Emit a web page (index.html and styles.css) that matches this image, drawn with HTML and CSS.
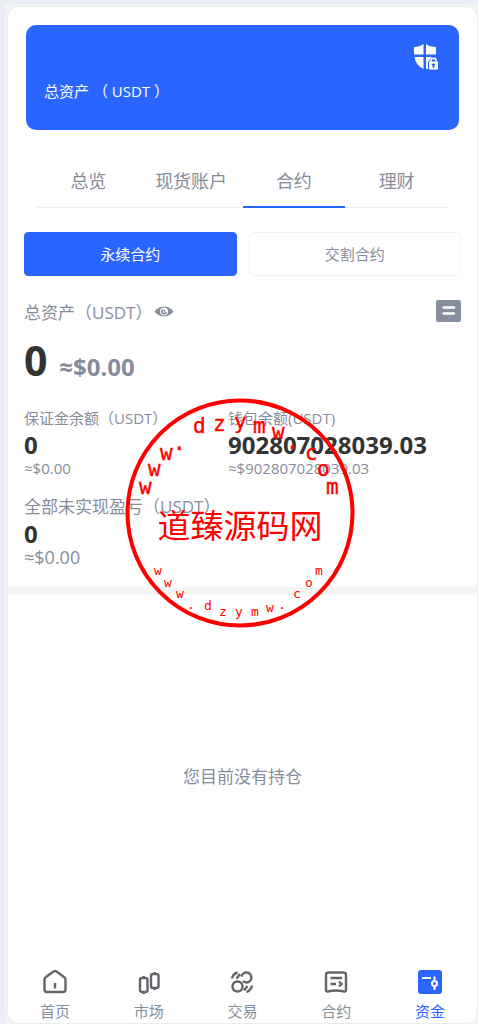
FILE: index.html
```
<!doctype html>
<html lang="zh-CN">
<head>
  <meta charset="utf-8">
  <meta name="viewport" content="width=device-width, initial-scale=1">
  <title>资金</title>
  <link rel="stylesheet" href="styles.css">
</head>
<body>
  <div class="shell">
    <div class="app">
      <main>
        <header class="banner">
          <button class="icon-btn" aria-label="安全">
            <svg width="26" height="28" viewBox="0 0 26 28">
              <path fill="#fff" d="M1 4Q7 4 10.500 1V11.500H1zM13 1Q16.500 4 23 4V11.500H13zM1.500 14H10.500V26Q2.500 22 1.500 14zM13 14H22.500V15Q20 13 17.500 15.500Q16 17 16 18.500H15V26H13z"/>
              <path fill="#fff" d="M16 18.500H25V26.500H16z"/>
              <path fill="none" stroke="#fff" stroke-width="1.500" d="M18 19V17Q18 15.500 20.500 15.500T23 17V19"/>
              <path fill="#2b65ff" d="M18.500 21.500Q20.500 19.500 22.500 21.500L21.300 23V25H19.700V23z"/>
            </svg>
          </button>
          <p>总资产 （ USDT ）</p>
        </header>

        <nav class="tabs">
          <a href="#">总览</a>
          <a href="#">现货账户</a>
          <a href="#" class="active">合约</a>
          <a href="#">理财</a>
        </nav>

        <div class="switch">
          <button class="active">永续合约</button>
          <button>交割合约</button>
        </div>

        <section class="assets">
          <div class="total-label">
            <span>总资产（USDT）</span>
            <button class="icon-btn" aria-label="显示余额">
              <svg width="20" height="14" viewBox="0 0 20 14">
                <path fill="#868d9f" fill-rule="evenodd" d="M.5 7.500Q4.500 2.500 10 2.500T19.500 7.500Q15.500 12.500 10 12.500T.5 7.500zM10 3.500a4 4 0 1 0 0 8a4 4 0 1 0 0-8z"/>
                <path fill="none" stroke="#868d9f" stroke-width="1.800" d="M9.300 5.500a2.200 2.200 0 1 0 2.900 2.600"/>
                <circle cx="10.500" cy="7" r="1" fill="#868d9f"/>
              </svg>
            </button>
            <button class="icon-btn records" aria-label="记录">
              <svg width="25" height="22" viewBox="0 0 25 22">
                <rect width="25" height="22" rx="2" fill="#868f9f"/>
                <path stroke="#fff" stroke-width="2.500" stroke-linecap="round" d="M7.500 7.500h10.500M7.500 13.500h10.500"/>
              </svg>
            </button>
          </div>
          <p class="total"><strong>0</strong> <b>≈$0.00</b></p>

          <div class="stats">
            <div class="stat">
              <h3>保证金余额（USDT）</h3>
              <strong>0</strong>
              <p>≈$0.00</p>
            </div>
            <div class="stat">
              <h3>钱包余额(USDT)</h3>
              <strong>902807028039.03</strong>
              <p>≈$902807028039.03</p>
            </div>
            <div class="stat large">
              <h3>全部未实现盈亏（USDT）</h3>
              <strong>0</strong>
              <p>≈$0.00</p>
            </div>
          </div>
        </section>

        <section class="positions">
          <p>您目前没有持仓</p>
        </section>
      </main>

      <nav class="bottom-nav">
        <a href="#">
          <svg viewBox="0 0 28 28">
            <path d="M3.500 11.500Q3.500 10 5 9L12.500 3.500Q14 2.600 15.500 3.500L23 9Q24.500 10 24.500 11.500V21.500Q24.500 24 22 24H6Q3.500 24 3.500 21.500zM14 15V20.500"/>
          </svg>
          <span>首页</span>
        </a>
        <a href="#">
          <svg viewBox="0 0 28 28">
            <rect x="5" y="10" width="7.500" height="14" rx="2"/>
            <rect x="16" y="6" width="7.500" height="14" rx="2"/>
            <path d="M8.700 8v2M8.700 24v2M19.700 4v2M19.700 20v2"/>
          </svg>
          <span>市场</span>
        </a>
        <a href="#">
          <svg viewBox="0 0 28 28">
            <circle cx="9.500" cy="18.500" r="5"/>
            <path d="M13.500 8.500a5 5 0 1 1 5.500 6Q16.500 14.500 15 13M4 10.500Q5 6 9.500 4.500M8.500 10.500L12 6M24 17.500Q23 22.500 18.500 24M19.500 18L16 22.500"/>
          </svg>
          <span>交易</span>
        </a>
        <a href="#">
          <svg viewBox="0 0 28 28">
            <path d="M4 7Q4 4.500 6.500 4.500H21.500Q24 4.500 24 7V22Q24 24 22 23.500Q14 21.500 6 23.500Q4 24 4 22zM8.500 10H20M8.500 16H14M17 13.500L19.500 16L17 18.500"/>
          </svg>
          <span>合约</span>
        </a>
        <a href="#" class="active">
          <svg viewBox="0 0 28 28">
            <rect class="fill" x="2" y="2" width="24" height="24" rx="3"/>
            <path class="light" d="M6 10h9M18.500 8.500v3.500M18.500 18.500v3.500"/>
            <circle class="light" cx="18.500" cy="15.500" r="2.500"/>
          </svg>
          <span>资金</span>
        </a>
      </nav>
    </div>

    <!-- stamp laid over the page -->
    <svg class="stamp" viewBox="0 0 230 230" aria-hidden="true">
      <circle cx="115" cy="115" r="112.500"/>
      <text class="ring" x="14 23 35 48 68 88 109 128 147 161 180 192 201" y="96 78 62 52 35 33 31 35 41 51 62 78 96">www.dzymw.com</text>
      <text class="name" x="115" y="140">道臻源码网</text>
      <text class="ring small" x="29 39 51 62 79 94 110 126 141 153 168 180 190" y="177 189 200 211 212 218 218 218 214 211 200 189 177">www.dzymw.com</text>
    </svg>
  </div>
</body>
</html>
```

FILE: styles.css
```
:root {
  --blue: #2b65ff;
  --gray: #868d9a;
  --dark: #333;
  --line: #ebecf0;
}
* { box-sizing: border-box; margin: 0; padding: 0; }
body {
  font-family: "Open Sans", "Noto Sans CJK SC", sans-serif;
  font-size: 15px;
  color: var(--gray);
  background: #e8edf6;
  padding: 4px 0 0 5px;
}
a { color: inherit; text-decoration: none; }
button { font: inherit; color: inherit; cursor: pointer; }
.icon-btn {
  display: flex;
  border: none;
  background: none;
}
.shell {
  position: relative;
  background: #f3f3f3;
  padding: 2px 0 0 2px;
}
.app {
  display: flex;
  flex-direction: column;
  min-height: calc(100vh - 6px);
  background: #fff;
  border: 1px solid var(--line);
  border-radius: 12px;
}
main {
  flex: 1;
  display: flex;
  flex-direction: column;
}

/* Banner */
.banner {
  display: flex;
  flex-direction: column;
  justify-content: space-between;
  height: 105px;
  margin: 18px 18px 0;
  padding: 18px 20px 27px 18px;
  border-radius: 10px;
  background: var(--blue);
  color: #fff;
}
.banner .icon-btn { align-self: flex-end; }
.banner p {
  height: 24px;
  line-height: 24px;
  white-space: pre;
}

/* Tabs */
.tabs {
  display: flex;
  margin: 26px 29px 0;
  border-bottom: 1px solid var(--line);
}
.tabs a {
  flex: 1;
  height: 52px;
  margin-bottom: -1px;
  line-height: 50px;
  font-size: 18px;
  text-align: center;
}
.tabs .active { border-bottom: 2px solid var(--blue); }

/* Contract type */
.switch {
  display: flex;
  gap: 12px;
  margin: 24px 16px 0;
}
.switch button {
  flex: 1;
  height: 44px;
  padding-bottom: 2px;
  border: 1px solid #f2f3f5;
  border-radius: 4px;
  background: #fff;
}
.switch .active {
  border-color: var(--blue);
  background: var(--blue);
  color: #fff;
}

/* Assets */
.assets {
  padding: 24px 16px 22px;
  border-bottom: 8px solid #f5f5f5;
}
.total-label {
  display: flex;
  align-items: center;
  gap: 2px;
  height: 22px;
  font-size: 17px;
}
.records { margin-left: auto; }
.total {
  height: 60px;
  margin: 8px 0 16px;
  line-height: 60px;
}
.total strong {
  margin-right: 8px;
  font-size: 41px;
  color: var(--dark);
}
.total b { font-size: 24px; }
.stats {
  display: grid;
  grid-template-columns: 204px 1fr;
  row-gap: 19px;
}
.stat h3 {
  height: 24px;
  line-height: 24px;
  font-size: 15px;
  font-weight: normal;
  white-space: nowrap;
}
.stat strong {
  display: block;
  line-height: 30px;
  font-size: 24px;
  color: var(--dark);
}
.stat p {
  height: 16px;
  line-height: 16px;
}
.stat.large { grid-column: 1 / -1; }
.stat.large h3 { font-size: 17px; }
.stat.large p { font-size: 18px; }

.positions {
  flex: 1;
  display: flex;
  align-items: center;
  justify-content: center;
  padding-bottom: 12px;
  font-size: 17px;
}

/* Bottom navigation */
.bottom-nav {
  display: flex;
  padding-bottom: 1px;
}
.bottom-nav a {
  flex: 1;
  display: flex;
  flex-direction: column;
  align-items: center;
}
.bottom-nav svg {
  width: 28px;
  height: 28px;
  margin-bottom: 4px;
  fill: none;
  stroke: #62666b;
  stroke-width: 2.4;
}
.bottom-nav span { line-height: 22px; }
.bottom-nav .active { color: var(--blue); }
.bottom-nav .fill { fill: var(--blue); stroke: none; }
.bottom-nav .light { stroke: #fff; stroke-width: 2; }

/* Stamp */
.stamp {
  position: absolute;
  top: 394px;
  left: 50%;
  width: 230px;
  height: 230px;
  margin-left: -117px;
  pointer-events: none;
}
.stamp circle {
  fill: none;
  stroke: #f00;
  stroke-width: 4;
}
.stamp text { fill: #f00; }
.stamp .name {
  font-family: "Noto Sans CJK SC", sans-serif;
  font-size: 33px;
  text-anchor: middle;
}
.stamp .ring {
  font-family: "DejaVu Sans Mono", monospace;
  font-size: 21px;
  stroke: #f00;
  stroke-width: 0.4;
}
.stamp .small {
  font-size: 13px;
  stroke: none;
}
```
